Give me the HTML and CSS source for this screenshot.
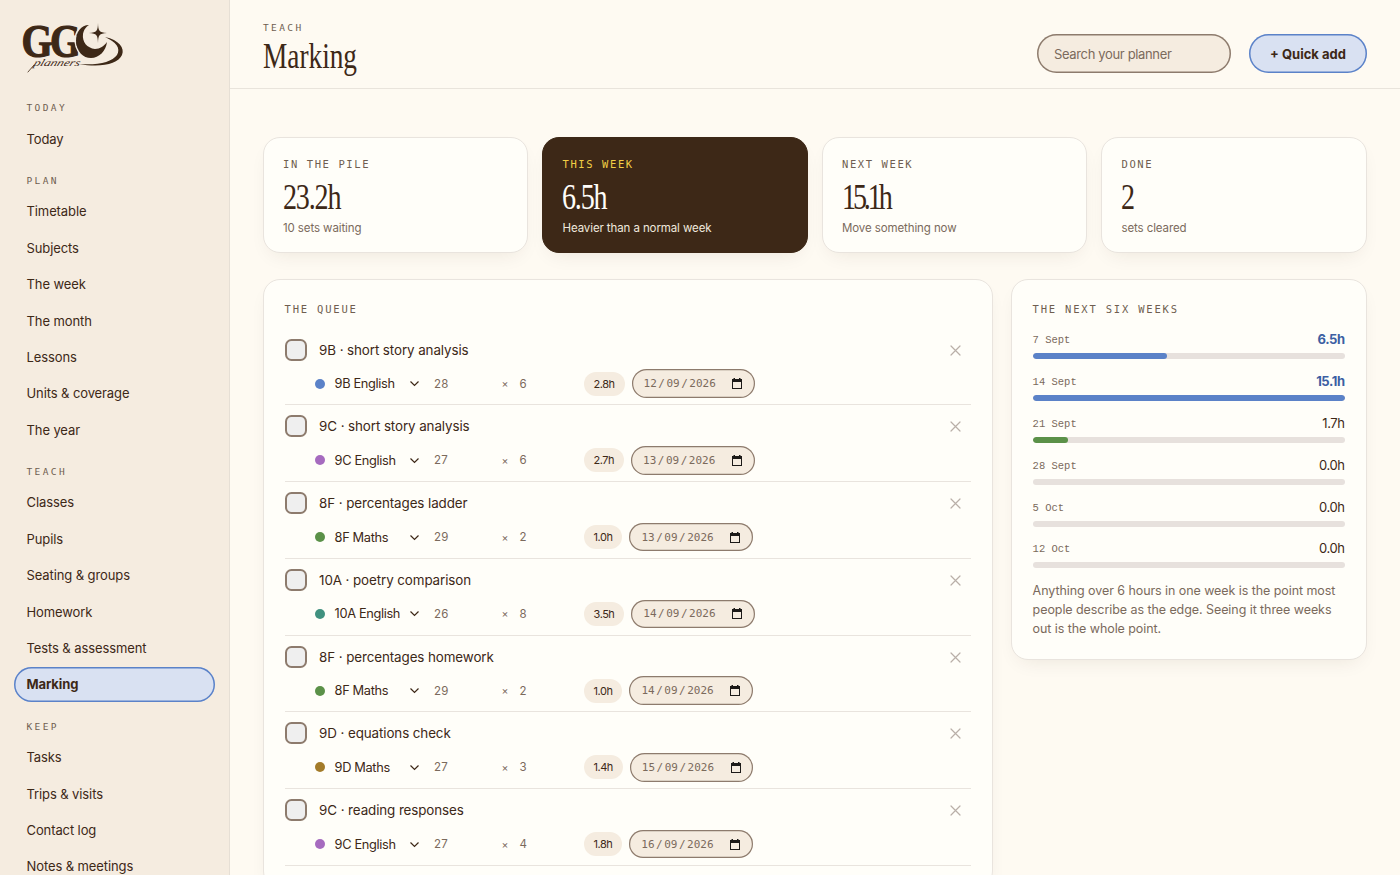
FILE: index.html
```html
<!DOCTYPE html>
<html lang="en">
<head>
    <meta charset="UTF-8">
    <meta name="viewport" content="width=device-width, initial-scale=1.0">
    <title>Marking</title>
    <link rel="stylesheet" href="styles.css">
</head>
<body>

    <aside class="sidebar">
        <svg class="logo" viewBox="0 0 104 52" width="104" height="52">
            <text class="logo-g" x="0.500" y="34" textLength="57" lengthAdjust="spacingAndGlyphs">GG</text>
            <path fill="none" stroke="#f5ece0" stroke-width="1.500" d="M67 1 C59 2 54 9 54 18 C55 27 59 32 64 35"/>
            <path fill="#3d2817" d="M68 2 C60 2 55 9 55 18 C56 29 62 35 70 35 C78 35 85 28 86 19 C83 23 79 26 74 26 C66 25 61 19 62 11 C63 6 65 4 68 2 Z"/>
            <path fill="#3d2817" d="M77 0 C77.300 8 78 9.500 86 10 C78 10.500 77.300 12 77 20 C76.700 12 76 10.500 68 10 C76 9.500 76.700 8 77 0 Z"/>
            <path fill="#3d2817" d="M84 14 C98 17 104 25 101 32 C97 41 80 45 58 41 C77 42.500 91 39 96 32 C100 25 95 19 84 14 Z"/>
            <text class="logo-script" transform="translate(12 43) skewX(-20)" textLength="46" lengthAdjust="spacingAndGlyphs">planners</text>
            <path fill="none" stroke="#3d2817" stroke-width=".8" stroke-linecap="round" d="M7 49 L13 42"/>
        </svg>

        <nav class="nav">
            <p class="nav-label">Today</p>
            <a class="nav-item">Today</a>

            <p class="nav-label">Plan</p>
            <a class="nav-item">Timetable</a>
            <a class="nav-item">Subjects</a>
            <a class="nav-item">The week</a>
            <a class="nav-item">The month</a>
            <a class="nav-item">Lessons</a>
            <a class="nav-item">Units &amp; coverage</a>
            <a class="nav-item">The year</a>

            <p class="nav-label">Teach</p>
            <a class="nav-item">Classes</a>
            <a class="nav-item">Pupils</a>
            <a class="nav-item">Seating &amp; groups</a>
            <a class="nav-item">Homework</a>
            <a class="nav-item">Tests &amp; assessment</a>
            <a class="nav-item active">Marking</a>

            <p class="nav-label">Keep</p>
            <a class="nav-item">Tasks</a>
            <a class="nav-item">Trips &amp; visits</a>
            <a class="nav-item">Contact log</a>
            <a class="nav-item">Notes &amp; meetings</a>
        </nav>
    </aside>

    <main class="main">
        <header class="topbar">
            <div>
                <p class="crumb">Teach</p>
                <h1>Marking</h1>
            </div>
            <div class="actions">
                <input class="search" type="text" placeholder="Search your planner">
                <button class="quick-add">+ Quick add</button>
            </div>
        </header>

        <div class="content">
            <section class="stats">
                <div class="card stat">
                    <p class="label">In the pile</p>
                    <p class="figure">23.2h</p>
                    <p class="note">10 sets waiting</p>
                </div>
                <div class="card stat dark">
                    <p class="label">This week</p>
                    <p class="figure">6.5h</p>
                    <p class="note">Heavier than a normal week</p>
                </div>
                <div class="card stat">
                    <p class="label">Next week</p>
                    <p class="figure tight">15.1h</p>
                    <p class="note">Move something now</p>
                </div>
                <div class="card stat">
                    <p class="label">Done</p>
                    <p class="figure">2</p>
                    <p class="note">sets cleared</p>
                </div>
            </section>

            <section class="columns">
                <div class="card panel">
                    <h2 class="label">The queue</h2>
                    <ul class="queue"></ul>
                </div>

                <div class="card panel">
                    <h2 class="label">The next six weeks</h2>
                    <ul class="weeks"></ul>
                    <p class="hint">Anything over 6 hours in one week is the point most people describe as the edge. Seeing it three weeks out is the whole point.</p>
                </div>
            </section>
        </div>
    </main>

    <script src="script.js"></script>
</body>
</html>
```
FILE: styles.css
```css
* {
    margin: 0;
    padding: 0;
    box-sizing: border-box;
}

body {
    display: flex;
    height: 100vh;
    overflow: hidden;
    background: #fefaf2;
    color: #3d2817;
    font-family: Inter, "Liberation Sans", sans-serif;
    font-size: 13px;
    letter-spacing: -0.1px;
}

ul {
    list-style: none;
}

/* sidebar */
.sidebar {
    width: 230px;
    flex-shrink: 0;
    padding: 23px 14px 0;
    background: #f5ece0;
    border-right: 1px solid #e6dfd5;
}

.logo {
    display: block;
    margin: 0 0 9px 7px;
    overflow: visible;
    fill: #3d2817;
}

.logo-g {
    font-family: "Liberation Serif", serif;
    font-size: 46px;
    font-weight: 700;
    letter-spacing: -3px;
    stroke: #3d2817;
    stroke-width: 1.2px;
}

.logo-script {
    font-family: "Liberation Serif", serif;
    font-size: 10px;
    font-style: italic;
}

.nav-label {
    height: 36.4px;
    padding: 17px 0 0 12.5px;
    line-height: 14px;
}

.nav-label,
.crumb {
    font-family: "DejaVu Sans Mono", monospace;
    font-size: 9.5px;
    letter-spacing: 2.4px;
    text-transform: uppercase;
    color: #6f5e50;
}

.nav {
    display: flex;
    flex-direction: column;
}

.nav-item {
    display: flex;
    align-items: center;
    height: 34.4px;
    margin: 1px 0;
    padding-left: 12.5px;
    border-radius: 18px;
}

.nav-item.active {
    background: #d9e1f2;
    box-shadow: inset 0 0 0 1.5px #5b82c8;
    font-weight: 700;
}

/* header */
.main {
    flex: 1;
}

.topbar {
    display: flex;
    justify-content: space-between;
    height: 89px;
    padding: 20px 33px 0;
    border-bottom: 1px solid #e9e4dc;
}

.crumb {
    line-height: 16px;
}

h1,
.figure {
    font-family: "Liberation Serif", serif;
    font-weight: 400;
    transform: scaleX(.78);
    transform-origin: left;
}

h1 {
    margin-top: 1px;
    font-size: 35px;
    line-height: 40px;
    letter-spacing: 0;
}

.actions {
    display: flex;
    gap: 18px;
    padding-top: 14px;
}

.search,
.quick-add {
    height: 39px;
    border: 0;
    border-radius: 20px;
    font: inherit;
}

.search {
    width: 194px;
    padding: 0 17px;
    background: #f5ece0;
    box-shadow: inset 0 0 0 1.5px #8d7b6d;
    letter-spacing: -.35px;
}

.search::placeholder {
    color: #7b6a5c;
}

.quick-add {
    width: 118px;
    background: #d9e1f2;
    box-shadow: inset 0 0 0 1.5px #5b82c8;
    color: #3d2817;
    font-weight: 700;
    letter-spacing: 0;
}

/* cards */
.content {
    padding: 48px 33.4px 0 32.6px;
}

.card {
    background: #fffef9;
    border: 1px solid #e9e4de;
    border-radius: 17px;
    box-shadow: 0 8px 20px -8px rgba(61, 40, 23, .1);
}

.label {
    font-family: "DejaVu Sans Mono", monospace;
    font-weight: 400;
    font-size: 10.5px;
    line-height: 16px;
    letter-spacing: 1.8px;
    text-transform: uppercase;
    color: #6f5e50;
}

.stats {
    display: grid;
    grid-template-columns: repeat(4, 1fr);
    gap: 14px;
}

.stat {
    height: 116px;
    padding: 18px 19.4px;
}

.stat .label {
    letter-spacing: 1.6px;
}

.figure {
    margin-bottom: -1px;
    padding-top: 1px;
    font-size: 36px;
    line-height: 48px;
    letter-spacing: -1.5px;
}

.figure.tight {
    letter-spacing: -4px;
}

.note {
    margin-top: -1px;
    font-size: 11.5px;
    line-height: 16px;
    color: #7b6a5c;
}

.dark {
    background: #3d2817;
    border-color: #3d2817;
    color: #fffdf9;
}

.dark .label {
    color: #f2cf45;
}

.dark .note {
    color: #f0e8dd;
}

.columns {
    display: grid;
    grid-template-columns: 730px 1fr;
    align-items: start;
    gap: 18px;
    margin-top: 26px;
}

.panel {
    padding: 21px;
}

/* marking queue */
.queue {
    margin-top: 11.6px;
}

.queue li {
    height: 76.75px;
    padding-top: 10px;
    border-bottom: 1px solid #e9e4de;
}

.task {
    display: flex;
    align-items: center;
    height: 22px;
    font-size: 13.4px;
}

.tick {
    width: 22px;
    height: 22px;
    margin-right: 12.5px;
    border: 2px solid #8d7b6d;
    border-radius: 6.5px;
    background: #efefef;
}

.remove {
    margin: 1px 10px 0 auto;
}

.details {
    display: flex;
    align-items: center;
    height: 28px;
    margin-top: 9px;
    padding-left: 30px;
}

.dot {
    width: 10px;
    height: 10px;
    margin-right: 10px;
    border-radius: 50%;
}

.group {
    width: 74.5px;
    font-size: 12.8px;
    letter-spacing: -.35px;
}

.pupils,
.minutes,
.times {
    font-size: 11.5px;
    color: #7b6a5c;
}

.pupils {
    width: 67.5px;
    margin-left: 14px;
    letter-spacing: .1px;
}

.times {
    width: 18px;
    font-size: 10.5px;
}

.minutes {
    width: 64px;
}

.hours {
    height: 24px;
    margin-right: 7px;
    padding: 0 10px;
    border-radius: 12px;
    background: #f5ece0;
    font-size: 11px;
    line-height: 24px;
    letter-spacing: -.5px;
}

.date {
    display: flex;
    align-items: center;
    width: 123.5px;
    height: 28.5px;
    padding-left: 12px;
    border-radius: 15px;
    background: #f5ece0;
    box-shadow: inset 0 0 0 1.2px #8d7b6d;
    font-family: "DejaVu Sans Mono", monospace;
    font-size: 11px;
    letter-spacing: 0;
    color: #7b6a5c;
}

.date i {
    padding: 0 1.5px;
    font-style: normal;
}

.date svg {
    margin-left: 16.500px;
}

/* week bars */
.weeks {
    margin-top: 11px;
}

.weeks li {
    height: 41.9px;
}

.week-row {
    display: flex;
    justify-content: space-between;
    height: 25px;
    line-height: 22px;
}

.week-row span {
    font-family: "Liberation Mono", monospace;
    font-size: 10.5px;
    line-height: 24px;
    letter-spacing: 0;
    color: #7b6a5c;
}

.week-row b {
    font-weight: 400;
    letter-spacing: -.4px;
}

.over b {
    font-weight: 700;
    color: #3c5fa3;
}

.bar {
    height: 6px;
    border-radius: 3px;
    background: #e7e1dd;
    overflow: hidden;
}

.bar div {
    height: 6px;
    border-radius: 3px;
    background: #5b9148;
}

.over .bar div {
    background: #5b82c8;
}

.hint {
    margin-top: 2px;
    font-size: 12.5px;
    line-height: 19px;
    letter-spacing: -.07px;
    color: #7b6a5c;
}
```
FILE: script.js
```js
const blue = '#5b82c8';
const purple = '#a66bbf';
const green = '#5b9148';
const teal = '#40917f';
const ochre = '#a37b29';

// title, class, dot colour, pupils, minutes each, hours, due date
const sets = [
    ['9B · short story analysis', '9B English', blue, 28, 6, '2.8h', '12/09/2026'],
    ['9C · short story analysis', '9C English', purple, 27, 6, '2.7h', '13/09/2026'],
    ['8F · percentages ladder', '8F Maths', green, 29, 2, '1.0h', '13/09/2026'],
    ['10A · poetry comparison', '10A English', teal, 26, 8, '3.5h', '14/09/2026'],
    ['8F · percentages homework', '8F Maths', green, 29, 2, '1.0h', '14/09/2026'],
    ['9D · equations check', '9D Maths', ochre, 27, 3, '1.4h', '15/09/2026'],
    ['9C · reading responses', '9C English', purple, 27, 4, '1.8h', '16/09/2026']
];

const weeks = [
    ['7 Sept', 6.5],
    ['14 Sept', 15.1],
    ['21 Sept', 1.7],
    ['28 Sept', 0],
    ['5 Oct', 0],
    ['12 Oct', 0]
];

document.querySelector('.queue').innerHTML = sets.map(s => `
    <li>
        <div class="task">
            <span class="tick"></span>
            <span>${s[0]}</span>
            <svg class="remove" width="11" height="11" viewBox="0 0 11 11" stroke="#b9afa8" stroke-width="1.2" stroke-linecap="round"><path d="M1 1 L10 10 M10 1 L1 10"/></svg>
        </div>
        <div class="details">
            <span class="dot" style="background:${s[2]}"></span>
            <span class="group">${s[1]}</span>
            <svg width="11" height="7" viewBox="0 0 11 7" fill="none" stroke="#3d2817" stroke-width="1.2"><path d="M1.500 1.500 L5.500 5.500 L9.500 1.500"/></svg>
            <span class="pupils">${s[3]}</span>
            <span class="times">×</span>
            <span class="minutes">${s[4]}</span>
            <span class="hours">${s[5]}</span>
            <span class="date">${s[6].replaceAll('/', '<i>/</i>')}
                <svg width="10" height="11" viewBox="0 0 10 11"><path fill="#1c1a18" fill-rule="evenodd" d="M0 1 H1.500 V0 H3 V1 H7 V0 H8.500 V1 H10 V11 H0 Z M1 4 V10 H9 V4 Z"/></svg>
            </span>
        </div>
    </li>`).join('');

const max = Math.max(...weeks.map(w => w[1]));

document.querySelector('.weeks').innerHTML = weeks.map(w => `
    <li class="${w[1] > 6 ? 'over' : ''}">
        <div class="week-row"><span>${w[0]}</span><b>${w[1].toFixed(1)}h</b></div>
        <div class="bar"><div style="width:${w[1] / max * 100}%"></div></div>
    </li>`).join('');
```
